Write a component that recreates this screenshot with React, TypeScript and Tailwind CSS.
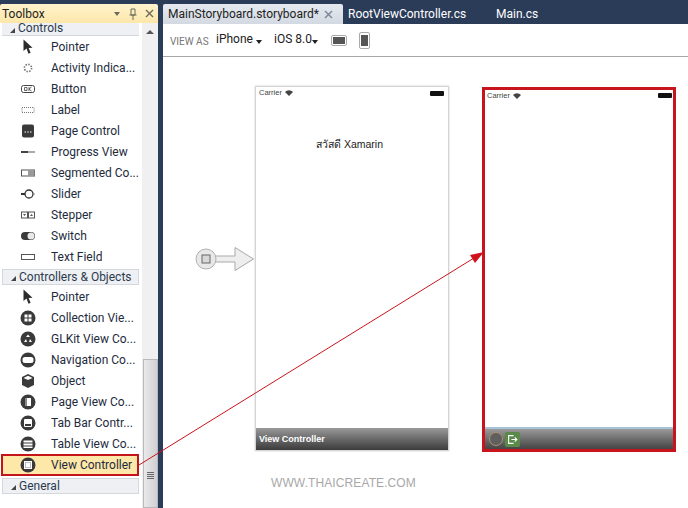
import React from "react";

const C = "#3a3a3a";
const svg = (children: React.ReactNode) => (
  <svg width="18" height="18" viewBox="0 0 18 18" className="shrink-0">{children}</svg>
);
const circle = (inner: React.ReactNode) =>
  svg(<><circle cx="9" cy="9" r="7.5" fill={C} />{inner}</>);

const Pointer = svg(<path d="M4.5 1.5 L4.5 13 L7.5 10.6 L9.5 15.8 L11.6 14.8 L9.6 10 L13.5 9.8 Z" fill="#2c2c2c" />);
const icons: Record<string, React.ReactNode> = {
  pointer: Pointer,
  activity: svg(<circle cx="9" cy="9" r="3.6" fill="none" stroke="#777" strokeWidth="1.6" strokeDasharray="1.5 1.3" />),
  button: svg(<><rect x="2.5" y="5.5" width="13" height="7" rx="2" fill="#fff" stroke="#444" /><path d="M5.5 7.5h2.5v3H5.5zM10 7v4M10 9l2.5-2M10 9l2.5 2" fill="none" stroke="#555" strokeWidth="0.9" /></>),
  label: svg(<rect x="3" y="6.5" width="12" height="5" fill="none" stroke="#777" strokeDasharray="1 1" />),
  page: svg(<><rect x="3" y="2.5" width="12" height="13" rx="2" fill={C} /><path d="M5.5 10h1.5M8.2 10h1.5M11 10h1.5" stroke="#fff" /></>),
  progress: svg(<><rect x="2" y="8" width="7" height="2" fill="#444" /><rect x="9" y="8" width="7" height="2" fill="#aaa" /></>),
  segmented: svg(<><rect x="2.5" y="6" width="13" height="6" fill="#fff" stroke="#555" /><rect x="9" y="6" width="6.5" height="6" fill="#999" /></>),
  slider: svg(<><path d="M2 9h4" stroke="#333" strokeWidth="2" /><circle cx="10" cy="9" r="4" fill="#fff" stroke="#333" strokeWidth="1.3" /><path d="M14 9h2" stroke="#888" /></>),
  stepper: svg(<><rect x="2.5" y="6" width="6" height="6" fill="#fff" stroke="#555" /><rect x="9.5" y="6" width="6" height="6" fill="#fff" stroke="#555" /><path d="M4 8h3l-1.5 2zM11 10h3l-1.5-2z" fill="#555" /></>),
  switch: svg(<><rect x="2" y="5" width="14" height="8" rx="4" fill={C} /><circle cx="12" cy="9" r="3.5" fill="#e8e8e8" /></>),
  textfield: svg(<rect x="2.5" y="6.5" width="13" height="5" fill="#fff" stroke="#555" />),
  collection: circle(<><rect x="5.5" y="5.5" width="3" height="3" fill="#fff" /><rect x="9.5" y="5.5" width="3" height="3" fill="#fff" /><rect x="5.5" y="9.5" width="3" height="3" fill="#fff" /><rect x="9.5" y="9.5" width="3" height="3" fill="#fff" /></>),
  glkit: circle(<path d="M9 4.5l2 2.5H7zM5 12l2-3 1 3zM13 12l-2-3-1 3z" fill="#fff" />),
  nav: circle(<rect x="3.5" y="6" width="11" height="6" rx="2.5" fill="#fff" />),
  object: svg(<><path d="M9 2l6 3v8l-6 3-6-3V5z" fill={C} /><path d="M4.5 6L9 3.8 13.5 6 9 8z" fill="#fff" /></>),
  pageview: circle(<><rect x="6" y="5" width="6" height="8" fill="#fff" /><rect x="6" y="5" width="2" height="8" fill="#888" /></>),
  tabbar2: circle(<><rect x="5" y="5" width="8" height="8" rx="1" fill="#fff" /><rect x="6" y="10" width="6" height="2" fill={C} /></>),
  table: circle(<><rect x="4.5" y="5.5" width="9" height="2" fill="#fff" /><rect x="4.5" y="8.5" width="9" height="2" fill="#fff" /><rect x="4.5" y="11.5" width="9" height="1.5" fill="#fff" /></>),
  vc: circle(<><rect x="5" y="5" width="8" height="8" fill="#fff" /><rect x="6.5" y="6.5" width="5" height="5" fill="none" stroke="#777" strokeDasharray="1 1" /></>),
};

const Row = ({ icon, label }: { icon: string; label: string }) => (
  <div className="h-[21px] flex items-center pl-[19px] gap-[14px] text-[12px] text-[#1e2b3c] whitespace-nowrap">
    {icons[icon]}
    <span>{label}</span>
  </div>
);

const Header = ({ label, clipped }: { label: string; clipped?: boolean }) => (
  <div className={`${clipped ? "h-[13px] items-center" : "h-4 mt-[2px] mb-[1px] border items-center"} ml-[2px] mr-[3px] flex bg-[#eef0f3] border-[#d4d7dc] border-b text-[12px] text-[#2b3a4e] whitespace-nowrap overflow-hidden`}>
    <span className="w-0 h-0 ml-[8px] mr-[3px] mt-[2px] border-l-[5px] border-b-[5px] border-l-transparent border-b-[#444]" />
    <span className={clipped ? "leading-[13px] -mt-[2px]" : "-mt-[1px]"}>{label}</span>
  </div>
);

const Status = ({ faded }: { faded?: boolean }) => (
  <div className={`flex items-center justify-between ${faded ? "h-[11px] pl-[2px] pr-[1px]" : "h-[12px] pl-[3px] pr-[4px]"} text-[7.5px] text-[#444] [font-family:'Liberation_Sans',sans-serif]`}>
    <div className="flex items-center gap-[3px]">
      <span>Carrier</span>
      <svg width="8" height="6" viewBox="0 0 8 6"><path d="M0 2a5.5 5.5 0 0 1 8 0L4 6z" fill="#444" /></svg>
    </div>
    <div className="w-[14px] h-[5px] bg-[#111] rounded-[1px]" />
  </div>
);

export default function App() {
  return (
    <div className="relative w-[688px] h-[508px] overflow-hidden flex bg-[#2b3c59] [font-family:Roboto,'Noto_Sans',sans-serif]">
      {/* Toolbox */}
      <div className="w-[158px] pt-[4px] flex flex-col shrink-0">
        <div className="h-[19px] flex items-center justify-between pl-[2px] pr-[4px] rounded-t-[2px] bg-gradient-to-b from-[#fff3cd] to-[#fde7a9] text-[12px] text-[#222]">
          <span>Toolbox</span>
          <div className="flex items-center text-[#6b6b5a]">
            <span className="w-0 h-0 border-x-[3px] border-t-[4px] border-x-transparent border-t-[#6b6b5a]" />
            <svg className="ml-[9px]" width="8" height="12" viewBox="0 0 8 12"><path d="M2 1h4v6H2zM0.5 7h7M4 7v5" fill="none" stroke="#6b6b5a" /></svg>
            <svg className="ml-[8px]" width="9" height="9" viewBox="0 0 9 9"><path d="M1 1l7 7M8 1l-7 7" stroke="#6b6b5a" strokeWidth="1.4" /></svg>
          </div>
        </div>
        <div className="flex-1 flex min-h-0">
          <div className="w-[142px] bg-white">
            <Header label="Controls" clipped />
            <Row icon="pointer" label="Pointer" />
            <Row icon="activity" label="Activity Indica..." />
            <Row icon="button" label="Button" />
            <Row icon="label" label="Label" />
            <Row icon="page" label="Page Control" />
            <Row icon="progress" label="Progress View" />
            <Row icon="segmented" label="Segmented Co..." />
            <Row icon="slider" label="Slider" />
            <Row icon="stepper" label="Stepper" />
            <Row icon="switch" label="Switch" />
            <Row icon="textfield" label="Text Field" />
            <Header label="Controllers & Objects" />
            <Row icon="pointer" label="Pointer" />
            <Row icon="collection" label="Collection Vie..." />
            <Row icon="glkit" label="GLKit View Co..." />
            <Row icon="nav" label="Navigation Co..." />
            <Row icon="object" label="Object" />
            <Row icon="pageview" label="Page View Co..." />
            <Row icon="tabbar2" label="Tab Bar Contr..." />
            <Row icon="table" label="Table View Co..." />
            <div className="ml-[1px] mr-[3px] h-[22px] border-2 border-[#c4141a] bg-[#fde7a9] flex items-center pl-[16px] gap-[14px] text-[12px] text-[#1e2b3c] whitespace-nowrap">
              {icons.vc}
              <span>View Controller</span>
            </div>
            <Header label="General" />
          </div>
          <div className="w-4 bg-[#f0f0f1] flex flex-col">
            <div className="h-[17px] flex items-center justify-center">
              <span className="w-0 h-0 border-x-[4px] border-b-[4px] border-x-transparent border-b-[#555]" />
            </div>
            <div className="mt-auto ml-[1px] h-[149px] bg-gradient-to-r from-[#e9e9ea] to-[#d0d0d3] border border-[#b9b9bc] flex justify-center pt-[112px]">
              <div className="flex flex-col gap-[1px]">
                <div className="w-[7px] h-[1px] bg-[#666]" />
                <div className="w-[7px] h-[1px] bg-[#666]" />
                <div className="w-[7px] h-[1px] bg-[#666]" />
                <div className="w-[7px] h-[1px] bg-[#666]" />
              </div>
            </div>
          </div>
        </div>
      </div>

      {/* Main */}
      <div className="ml-[5px] flex-1 pt-[4px] flex flex-col min-w-0">
        <div className="h-[20px] flex items-center text-[12px] whitespace-nowrap">
          <div className="h-full w-[180px] bg-gradient-to-b from-[#e6eaf0] to-[#d3d9e2] rounded-t-[2px] flex items-center pl-[5px] text-[#222]">
            <span className="w-[156px]">MainStoryboard.storyboard*</span>
            <svg width="9" height="9" viewBox="0 0 9 9"><path d="M1 1l7 7M8 1l-7 7" stroke="#7a8494" strokeWidth="1.4" /></svg>
          </div>
          <span className="ml-[5px] w-[148px] text-white">RootViewController.cs</span>
          <span className="text-white">Main.cs</span>
        </div>
        <div className="h-[33px] bg-white border-b border-[#a8a8a8] flex items-center pl-[7px] text-[#222] text-[12px] whitespace-nowrap">
          <span className="text-[10px] text-[#777] mt-[3px] w-[46px]">VIEW AS</span>
          <span className="-mt-[2px] w-[40px]">iPhone</span>
          <span className="mt-[4px] w-0 h-0 border-x-[3.5px] border-t-[4px] border-x-transparent border-t-[#222]" />
          <span className="ml-[12px] -mt-[2px] w-[38px]">iOS 8.0</span>
          <span className="mt-[4px] w-0 h-0 border-x-[3.5px] border-t-[4px] border-x-transparent border-t-[#222]" />
          <div className="ml-[13px] w-[16px] h-[11px] border border-[#aaa] rounded-[2px] bg-white p-[1px]"><div className="w-full h-full bg-[#555]" /></div>
          <div className="ml-[12px] w-[11px] h-[17px] border border-[#aaa] rounded-[2px] bg-white py-[2px] px-[1px]"><div className="w-full h-full bg-[#555]" /></div>
        </div>
        <div className="flex-1 bg-white flex items-start pl-[32px] pt-[29px]">
          <svg width="60" height="26" viewBox="0 0 60 26" className="mt-[160px] shrink-0">
            <path d="M20 10h20V1.5L58.5 13 40 24.5V16H20z" fill="#eeeeee" stroke="#a9a9a9" />
            <circle cx="11" cy="13" r="10" fill="#e8e8e8" stroke="#b0b0b0" />
            <rect x="7" y="9" width="8" height="8" fill="#d8d8d8" stroke="#666" />
          </svg>
          <div className="w-[194px] h-[365px] border border-[#d5d5d5] bg-white flex flex-col shadow-[0_0_2px_#ccc]">
            <Status />
            <div className="mt-[38px] text-[10.5px] text-[#222] pl-[60px] whitespace-nowrap [font-family:'Liberation_Sans','Noto_Sans',sans-serif]">สวัสดี Xamarin</div>
            <div className="mt-auto h-[22px] bg-gradient-to-b from-[#9a9a9a] to-[#3c3c3c] flex items-center pl-[3px] pt-[2px] text-[9px] font-bold text-white [font-family:'Liberation_Sans',sans-serif]">View Controller</div>
          </div>
          <div className="ml-[33px] mt-[1px] w-[194px] h-[365px] border-[3px] border-[#c8141c] bg-white flex flex-col">
            <Status faded />
            <div className="mt-auto h-[22px] border-t-[2px] border-[#a6c3d6] bg-gradient-to-b from-[#9a9a9a] to-[#454545] flex items-center pl-[4px] gap-[2px]">
              <div className="w-[14px] h-[14px] rounded-full border border-[#b09070] bg-[#5f5f5f]" />
              <div className="w-[15px] h-[15px] rounded-[2px] bg-[#5a8a4a] flex items-center justify-center">
                <svg width="11" height="11" viewBox="0 0 10 10"><path d="M6 1.5H1.5v7H6M4 5h5M7 3l2 2-2 2" fill="none" stroke="#fff" /></svg>
              </div>
            </div>
          </div>
        </div>
      </div>

      {/* Annotation arrow */}
      <svg className="absolute inset-0 pointer-events-none" width="688" height="508" viewBox="0 0 688 508">
        <path d="M139 465 L474 258" stroke="#c8141c" strokeWidth="1" />
        <path d="M484 252 L470 255 L475 263 Z" fill="#d0121a" />
      </svg>

      {/* Watermark */}
      <div className="absolute left-[271px] top-[474px] text-[12px] text-[#a8a8a8] tracking-[0.1px] [font-family:'Liberation_Sans',sans-serif]">WWW.THAICREATE.COM</div>
    </div>
  );
}
